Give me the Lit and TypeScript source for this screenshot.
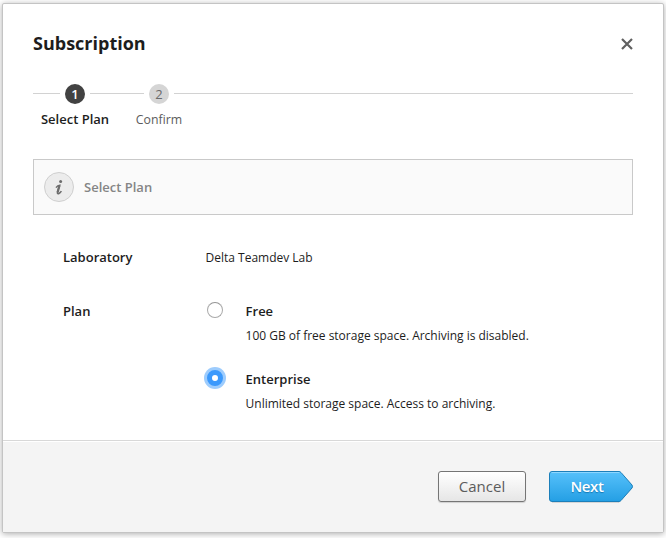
import { LitElement, html, css } from "lit";
import { customElement, state } from "lit/decorators.js";
import { classMap } from "lit/directives/class-map.js";

interface Plan {
  name: string;
  text: string;
}

const plans: Plan[] = [
  { name: "Free", text: "100 GB of free storage space. Archiving is disabled." },
  { name: "Enterprise", text: "Unlimited storage space. Access to archiving." },
];

@customElement("wizard-steps")
export class WizardSteps extends LitElement {
  static styles = css`
    :host {
      display: flex;
      height: 46px;
      align-items: flex-start;
    }
    .line {
      height: 1px;
      margin-top: 9px;
      background: #d2d2d2;
    }
    .lead { width: 27px; }
    .between { width: 54px; }
    .tail { flex: 1; }
    .step {
      width: 30px;
      display: flex;
      flex-direction: column;
      align-items: center;
      white-space: nowrap;
      color: #5c5c5c;
      font-size: 12.3px;
    }
    .dot {
      width: 20px;
      height: 20px;
      border-radius: 50%;
      background: #d5d5d5;
      color: #6a6a6a;
      font-size: 13px;
      line-height: 21px;
      text-align: center;
    }
    .label {
      margin-top: 6px;
      line-height: 20px;
    }
    .current {
      color: #1d1d1d;
      font-size: 13px;
      font-weight: 600;
    }
    .current .label { margin-top: 5px; }
    .current .dot {
      background: #424242;
      color: #fff;
    }
  `;

  render() {
    return html`
      <div class="line lead"></div>
      <div class="step current"><div class="dot">1</div><div class="label">Select Plan</div></div>
      <div class="line between"></div>
      <div class="step"><div class="dot">2</div><div class="label">Confirm</div></div>
      <div class="line tail"></div>
    `;
  }
}

@customElement("app-root")
export class AppRoot extends LitElement {
  @state() private selected = 1;

  static styles = css`
    :host {
      display: block;
      box-sizing: border-box;
      height: 538px;
      padding: 3px 2px 5px;
      overflow: hidden;
      background: #fff;
      font-family: "Open Sans", sans-serif;
      font-size: 12px;
      color: #1d1d1d;
    }
    * { box-sizing: border-box; }
    .dialog {
      display: flex;
      flex-direction: column;
      height: 530px;
      border: 1px solid #c4c4c4;
      border-radius: 2px;
      background: #fff;
      box-shadow: 0 1px 6px rgba(0, 0, 0, 0.32);
    }
    .main {
      flex: 1;
      padding: 28px 30px 0;
    }
    .head {
      display: flex;
      justify-content: space-between;
      align-items: center;
      height: 24px;
      margin-bottom: 28px;
    }
    .title {
      margin: -2px 0 0;
      font-size: 18px;
      font-weight: 700;
      line-height: 24px;
    }
    .close {
      display: block;
      width: 12px;
      height: 12px;
    }
    .notice {
      display: flex;
      align-items: center;
      gap: 10px;
      height: 56px;
      margin-top: 29px;
      padding-left: 10px;
      border: 1px solid #c9c9c9;
      background: #fafafa;
      color: #858585;
      font-size: 13px;
      font-weight: 600;
    }
    .info {
      width: 30px;
      height: 30px;
      border: 1px solid #cfcfcf;
      border-radius: 50%;
      background: #ececec;
    }
    .info svg { display: block; }
    .form {
      display: grid;
      grid-template-columns: 142.6px 1fr;
      row-gap: 34px;
      padding: 32px 0 0 30px;
      line-height: 20px;
    }
    .key, .name {
      font-size: 13px;
      font-weight: 600;
    }
    .value { padding-top: 1px; }
    .value, .text { letter-spacing: -0.01px; }
    .plans {
      display: flex;
      flex-direction: column;
      gap: 23px;
      margin-top: -1px;
    }
    .form > .key:nth-of-type(3) { margin-top: -1px; }
    .plan {
      display: grid;
      grid-template-columns: 40px 1fr;
      align-items: start;
    }
    .radio {
      width: 16px;
      height: 16px;
      margin: 1px 0 0 1.4px;
      border: 1px solid #a9a9a9;
      border-top-color: #959595;
      border-radius: 50%;
      background: #fff;
    }
    .on {
      border: 5px solid #3b99fc;
      box-shadow: 0 0 0 3px #9dccfd;
    }
    .text { margin-top: 5px; }
    .foot {
      display: flex;
      justify-content: flex-end;
      align-items: flex-start;
      gap: 23px;
      height: 92px;
      padding: 30px 30px 0 0;
      border-top: 1px solid #d8d8d8;
      background: #f4f4f4;
      box-shadow: inset 0 1px #fff;
    }
    button {
      height: 31px;
      padding: 0;
      font: 15px/29px "Open Sans", sans-serif;
    }
    .cancel {
      width: 88px;
      border: 1px solid #757575;
      border-radius: 3px;
      background: linear-gradient(#fff, #e6e6e6);
      box-shadow: 0 1px 1px rgba(0, 0, 0, 0.15);
      color: #5c5c5c;
    }
    .next {
      display: grid;
      width: 84px;
      border: 0;
      background: none;
      color: #fff;
      font-weight: 600;
      letter-spacing: -0.4px;
      line-height: 31px;
      text-shadow: 0 1px 1px #1679b5;
    }
    .next > * { grid-area: 1 / 1; }
    .next svg { display: block; overflow: visible; }
    .next span { width: 76px; z-index: 1; }
  `;

  render() {
    return html`
      <div class="dialog">
        <div class="main">
          <div class="head">
            <h1 class="title">Subscription</h1>
            <svg class="close" viewBox="0 0 12 12">
              <path d="M1 1L11 11M11 1L1 11" stroke="#606060" stroke-width="2.2" />
            </svg>
          </div>
          <wizard-steps></wizard-steps>
          <div class="notice">
            <div class="info">
              <svg width="28" height="28" viewBox="0 0 28 28">
                <circle cx="15.6" cy="8.6" r="1.5" fill="#6c6c6c" />
                <path d="M11 14.6Q12.6 12.4 14.8 12.3L12.6 18.6Q11.9 21.2 13.6 20.7Q15.2 20 16.4 18.2" fill="none" stroke="#6c6c6c" stroke-width="1.5" />
                <path d="M14.4 12.6L12.6 19.4" stroke="#6c6c6c" stroke-width="2.2" />
              </svg>
            </div>
            <span>Select Plan</span>
          </div>
          <div class="form">
            <div class="key">Laboratory</div>
            <div class="value">Delta Teamdev Lab</div>
            <div class="key">Plan</div>
            <div class="plans">
              ${plans.map(
                (plan, i) => html`
                  <div class="plan" @click=${() => (this.selected = i)}>
                    <div class=${classMap({ radio: true, on: i === this.selected })}></div>
                    <div>
                      <div class="name">${plan.name}</div>
                      <div class="text">${plan.text}</div>
                    </div>
                  </div>
                `
              )}
            </div>
          </div>
        </div>
        <div class="foot">
          <button class="cancel">Cancel</button>
          <button class="next">
            <svg width="84" height="31" viewBox="0 0 84 31">
              <defs>
                <linearGradient id="blue" x2="0" y2="1">
                  <stop stop-color="#57c1fb" />
                  <stop offset="1" stop-color="#249fe4" />
                </linearGradient>
              </defs>
              <path d="M3 1.5H70L83.2 14.5Q84 15.5 83.2 16.5L70 31.5H3" fill="none" stroke="#000" stroke-opacity=".12" />
              <path d="M3 .5H70Q71 .5 72 1.5L83 14Q84 15.5 83 17L72 29.5Q71 30.5 70 30.5H3Q.5 30.5 .5 28V3Q.5 .5 3 .5Z" fill="url(#blue)" stroke="#1c7fba" />
              <path d="M2.5 1.5H70.5" stroke="#8dd6ff" />
            </svg>
            <span>Next</span>
          </button>
        </div>
      </div>
    `;
  }
}
